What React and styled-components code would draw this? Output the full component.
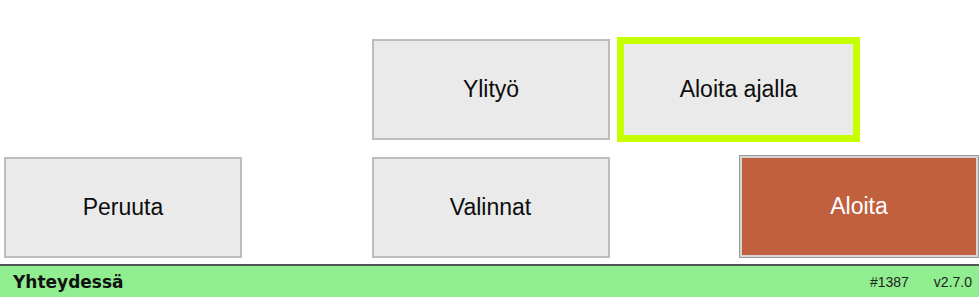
import React from 'react';
import styled, { createGlobalStyle } from 'styled-components';

const GlobalStyle = createGlobalStyle`
  html, body {
    margin: 0;
    padding: 0;
    background: #ffffff;
    font-family: "Liberation Sans", Arial, sans-serif;
  }
`;

const Screen = styled.div`
  width: 979px;
  height: 297px;
  display: flex;
  flex-direction: column;
  overflow: hidden;
`;

const Actions = styled.div`
  flex: 1;
  display: flex;
  flex-direction: column;
  padding-top: 37px;
  gap: 13px;
`;

const TopRow = styled.div`
  display: flex;
  align-items: center;
  gap: 7px;
  padding-left: 372px;
`;

const BottomRow = styled.div`
  display: flex;
  align-items: flex-start;
  justify-content: space-between;
  padding-left: 4px;
`;

const Button = styled.button`
  box-sizing: border-box;
  width: ${p => (p.$wide ? '240px' : '238px')};
  height: ${p => (p.$tall ? '103px' : '101px')};
  margin-top: ${p => (p.$offset ? `${p.$offset}px` : '0')};
  display: flex;
  align-items: center;
  justify-content: center;
  font-family: "Liberation Sans", Arial, sans-serif;
  font-size: 23px;
  color: #0d0d0d;
  background: #eaeaea;
  border: 2px solid #bdbdbd;
  padding: 0;
  cursor: pointer;
`;

const FocusButton = styled(Button)`
  width: 243px;
  height: 105px;
  border: 7px solid #c6ff00;
`;

const StartButton = styled(Button)`
  color: #ffffff;
  background: #c0603f;
  border: 1px solid #9a9a9a;
  box-shadow: inset 0 0 0 2px #d6d6d6;
`;

const StatusBar = styled.div`
  box-sizing: border-box;
  height: 33px;
  border-top: 2px solid #555555;
  background: #90ee90;
  display: flex;
  align-items: center;
  padding: 0 7px 0 13px;
`;

const StatusText = styled.div`
  flex: 1;
  font-family: "DejaVu Sans", Verdana, sans-serif;
  font-weight: bold;
  font-size: 17px;
  color: #111111;
`;

const Meta = styled.span`
  font-size: 14px;
  color: #222222;
  margin-left: ${p => p.$gap || 0}px;
`;

export default function App() {
  return (
    <>
      <GlobalStyle />
      <Screen>
        <Actions>
          <TopRow>
            <Button>Ylityö</Button>
            <FocusButton>Aloita ajalla</FocusButton>
          </TopRow>
          <BottomRow>
            <Button $offset={2}>Peruuta</Button>
            <Button $offset={2}>Valinnat</Button>
            <StartButton $wide $tall>Aloita</StartButton>
          </BottomRow>
        </Actions>
        <StatusBar>
          <StatusText>Yhteydessä</StatusText>
          <Meta>#1387</Meta>
          <Meta $gap={25}>v2.7.0</Meta>
        </StatusBar>
      </Screen>
    </>
  );
}
